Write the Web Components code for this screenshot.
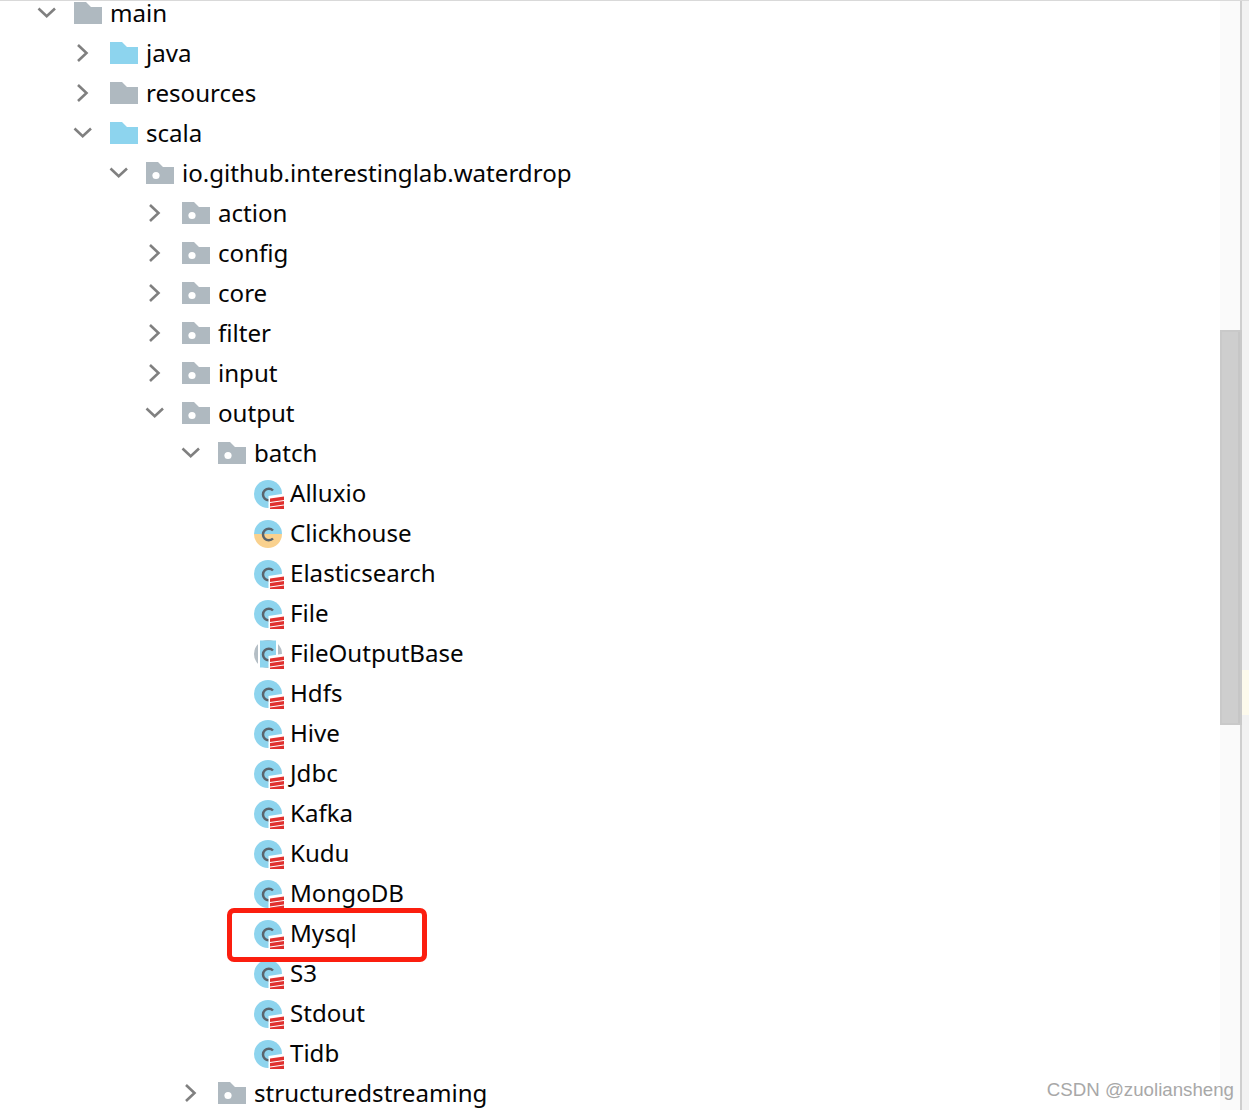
<!DOCTYPE html>
<html lang="en"><head><meta charset="utf-8"><title>Project tree</title>
<style>html,body{margin:0;height:100%;overflow:hidden;background:#fff}</style></head>
<body>
<template id="row-t"><style>
:host{display:flex;align-items:center;height:40px;font:24.1px/40px "Noto Sans",sans-serif;color:#050505;white-space:nowrap;padding-left:calc(var(--lv,0) * 36px + 36px)}
.ch{width:38px;height:40px;flex:none;display:flex;align-items:center}
.ic{width:36px;height:40px;flex:none}
svg{display:block}
</style><div class="ch"></div><div class="ic"></div><div class="t"><slot></slot></div></template>
<script>
const CH={open:'<svg width="22" height="40" viewBox="0 0 22 40"><path d="M2.500 15.500 10.700 23.300 19 15.500" fill="none" stroke="#808080" stroke-width="2.600"/></svg>',
closed:'<svg width="22" height="40" viewBox="0 0 22 40"><path d="M6 12 14.500 20 6 28" fill="none" stroke="#808080" stroke-width="2.600"/></svg>',none:''};
const F=(c,d)=>`<svg width="28" height="40" viewBox="0 0 28 40"><path d="M0 9H12L17 14H28V31H0Z" fill="${c}"/>${d?'<circle cx="10" cy="22.500" r="3.600" fill="#fff"/>':''}</svg>`;
const DB='<path d="M14.500 23 31 20.500V37.500H14.500Z" fill="#fff"/><g fill="#e0312f"><path d="M16 25.500 30 23.500V27L16 29Z"/><path d="M16 30 30 28V31.500L16 33.500Z"/><path d="M16 34.500 30 32.500V36H16Z"/></g>';
const C='<path d="M19 17.500A5.800 5.800 0 1 0 19 25.500" fill="none" stroke="#5a646c" stroke-width="2.500"/>';
const wrap=s=>`<svg width="32" height="40" viewBox="0 0 32 40" style="overflow:visible">${s}</svg>`;
const IC={blue:F('#8dd4ee'),grey:F('#afb9c0'),pkg:F('#afb9c0',1),
cls:wrap('<circle cx="14" cy="21" r="14" fill="#8dd4ee"/>'+C+DB),
obj:wrap('<path d="M0 21a14 14 0 0 1 28 0Z" fill="#8dd4ee"/><path d="M0 21a14 14 0 0 0 28 0Z" fill="#f9d18e"/>'+C),
abs:wrap('<circle cx="14" cy="21" r="14" fill="#b4bec5"/><rect x="4" y="7" width="2" height="28" fill="#fff"/><path d="M6 7.500H22V34.500H6Z" fill="#8dd4ee"/><rect x="22" y="7" width="2" height="28" fill="#fff"/>'+C+DB),none:''};
class TreeRow extends HTMLElement{
 constructor(){super();const r=this.attachShadow({mode:'open'});r.appendChild(document.getElementById('row-t').content.cloneNode(true));}
 connectedCallback(){this.style.setProperty('--lv',this.getAttribute('level')||0);
  const r=this.shadowRoot;r.querySelector('.ch').innerHTML=CH[this.getAttribute('arrow')||'none'];r.querySelector('.ic').innerHTML=IC[this.getAttribute('icon')];}
}
customElements.define('tree-row',TreeRow);
class ProjectTree extends HTMLElement{
 constructor(){super();this.attachShadow({mode:'open'}).innerHTML='<style>:host{display:block;flex:1;min-width:0;margin-top:-7px}</style><slot></slot>';}
}
customElements.define('project-tree',ProjectTree);
class ScrollRail extends HTMLElement{
 constructor(){super();this.attachShadow({mode:'open'}).innerHTML=`<style>
 :host{display:flex;width:29px;flex:none;height:1110px;background:#f2f2f2;position:relative}
 .tr{width:20px;background:#fafafa;flex:none}.ln{width:2px;background:#cfcfcf;flex:none}
 .th{position:absolute;left:0;top:330px;width:22px;height:395px;background:#cecece;box-sizing:border-box;border:2px solid #c9c9c9}
 .th::after{content:"";position:absolute;left:16px;top:0;width:2px;height:100%;background:#c6c6c6}
 .mk{position:absolute;left:22px;top:670px;width:7px;height:45px;background:#fdfaec}
 </style><div class="tr"></div><div class="ln"></div><div class="th"></div><div class="mk"></div>`;}
}
customElements.define('scroll-rail',ScrollRail);
class RedMark extends HTMLElement{
 constructor(){super();this.attachShadow({mode:'open'}).innerHTML='<style>:host{position:absolute;left:227px;top:908px;width:200px;height:54px;box-sizing:border-box;border:5px solid #fb1e0f;border-radius:7px}</style>';}
}
customElements.define('red-mark',RedMark);
class WaterMark extends HTMLElement{
 constructor(){super();this.attachShadow({mode:'open'}).innerHTML='<style>:host{position:absolute;right:15px;top:1078px;font:18.7px/24px "Liberation Sans",sans-serif;color:#a8a8a8;white-space:nowrap}</style><slot></slot>';}
}
customElements.define('water-mark',WaterMark);
class IdeWindow extends HTMLElement{
 constructor(){super();this.attachShadow({mode:'open'}).innerHTML='<style>:host{display:flex;height:1110px;overflow:hidden;position:relative;box-sizing:border-box}.top{position:absolute;left:0;right:0;top:0;height:1px;background:#d9d9d9;z-index:2}</style><div class="top"></div><slot></slot>';}
}
customElements.define('ide-window',IdeWindow);
</script>
<ide-window>
<project-tree>
<tree-row level="0" arrow="open" icon="grey">main</tree-row>
<tree-row level="1" arrow="closed" icon="blue">java</tree-row>
<tree-row level="1" arrow="closed" icon="grey">resources</tree-row>
<tree-row level="1" arrow="open" icon="blue">scala</tree-row>
<tree-row level="2" arrow="open" icon="pkg">io.github.interestinglab.waterdrop</tree-row>
<tree-row level="3" arrow="closed" icon="pkg">action</tree-row>
<tree-row level="3" arrow="closed" icon="pkg">config</tree-row>
<tree-row level="3" arrow="closed" icon="pkg">core</tree-row>
<tree-row level="3" arrow="closed" icon="pkg">filter</tree-row>
<tree-row level="3" arrow="closed" icon="pkg">input</tree-row>
<tree-row level="3" arrow="open" icon="pkg">output</tree-row>
<tree-row level="4" arrow="open" icon="pkg">batch</tree-row>
<tree-row level="5" icon="cls">Alluxio</tree-row>
<tree-row level="5" icon="obj">Clickhouse</tree-row>
<tree-row level="5" icon="cls">Elasticsearch</tree-row>
<tree-row level="5" icon="cls">File</tree-row>
<tree-row level="5" icon="abs">FileOutputBase</tree-row>
<tree-row level="5" icon="cls">Hdfs</tree-row>
<tree-row level="5" icon="cls">Hive</tree-row>
<tree-row level="5" icon="cls">Jdbc</tree-row>
<tree-row level="5" icon="cls">Kafka</tree-row>
<tree-row level="5" icon="cls">Kudu</tree-row>
<tree-row level="5" icon="cls">MongoDB</tree-row>
<tree-row level="5" icon="cls">Mysql</tree-row>
<tree-row level="5" icon="cls">S3</tree-row>
<tree-row level="5" icon="cls">Stdout</tree-row>
<tree-row level="5" icon="cls">Tidb</tree-row>
<tree-row level="4" arrow="closed" icon="pkg">structuredstreaming</tree-row>
</project-tree>
<scroll-rail></scroll-rail>
<red-mark></red-mark>
<water-mark>CSDN @zuoliansheng</water-mark>
</ide-window>
</body></html>
